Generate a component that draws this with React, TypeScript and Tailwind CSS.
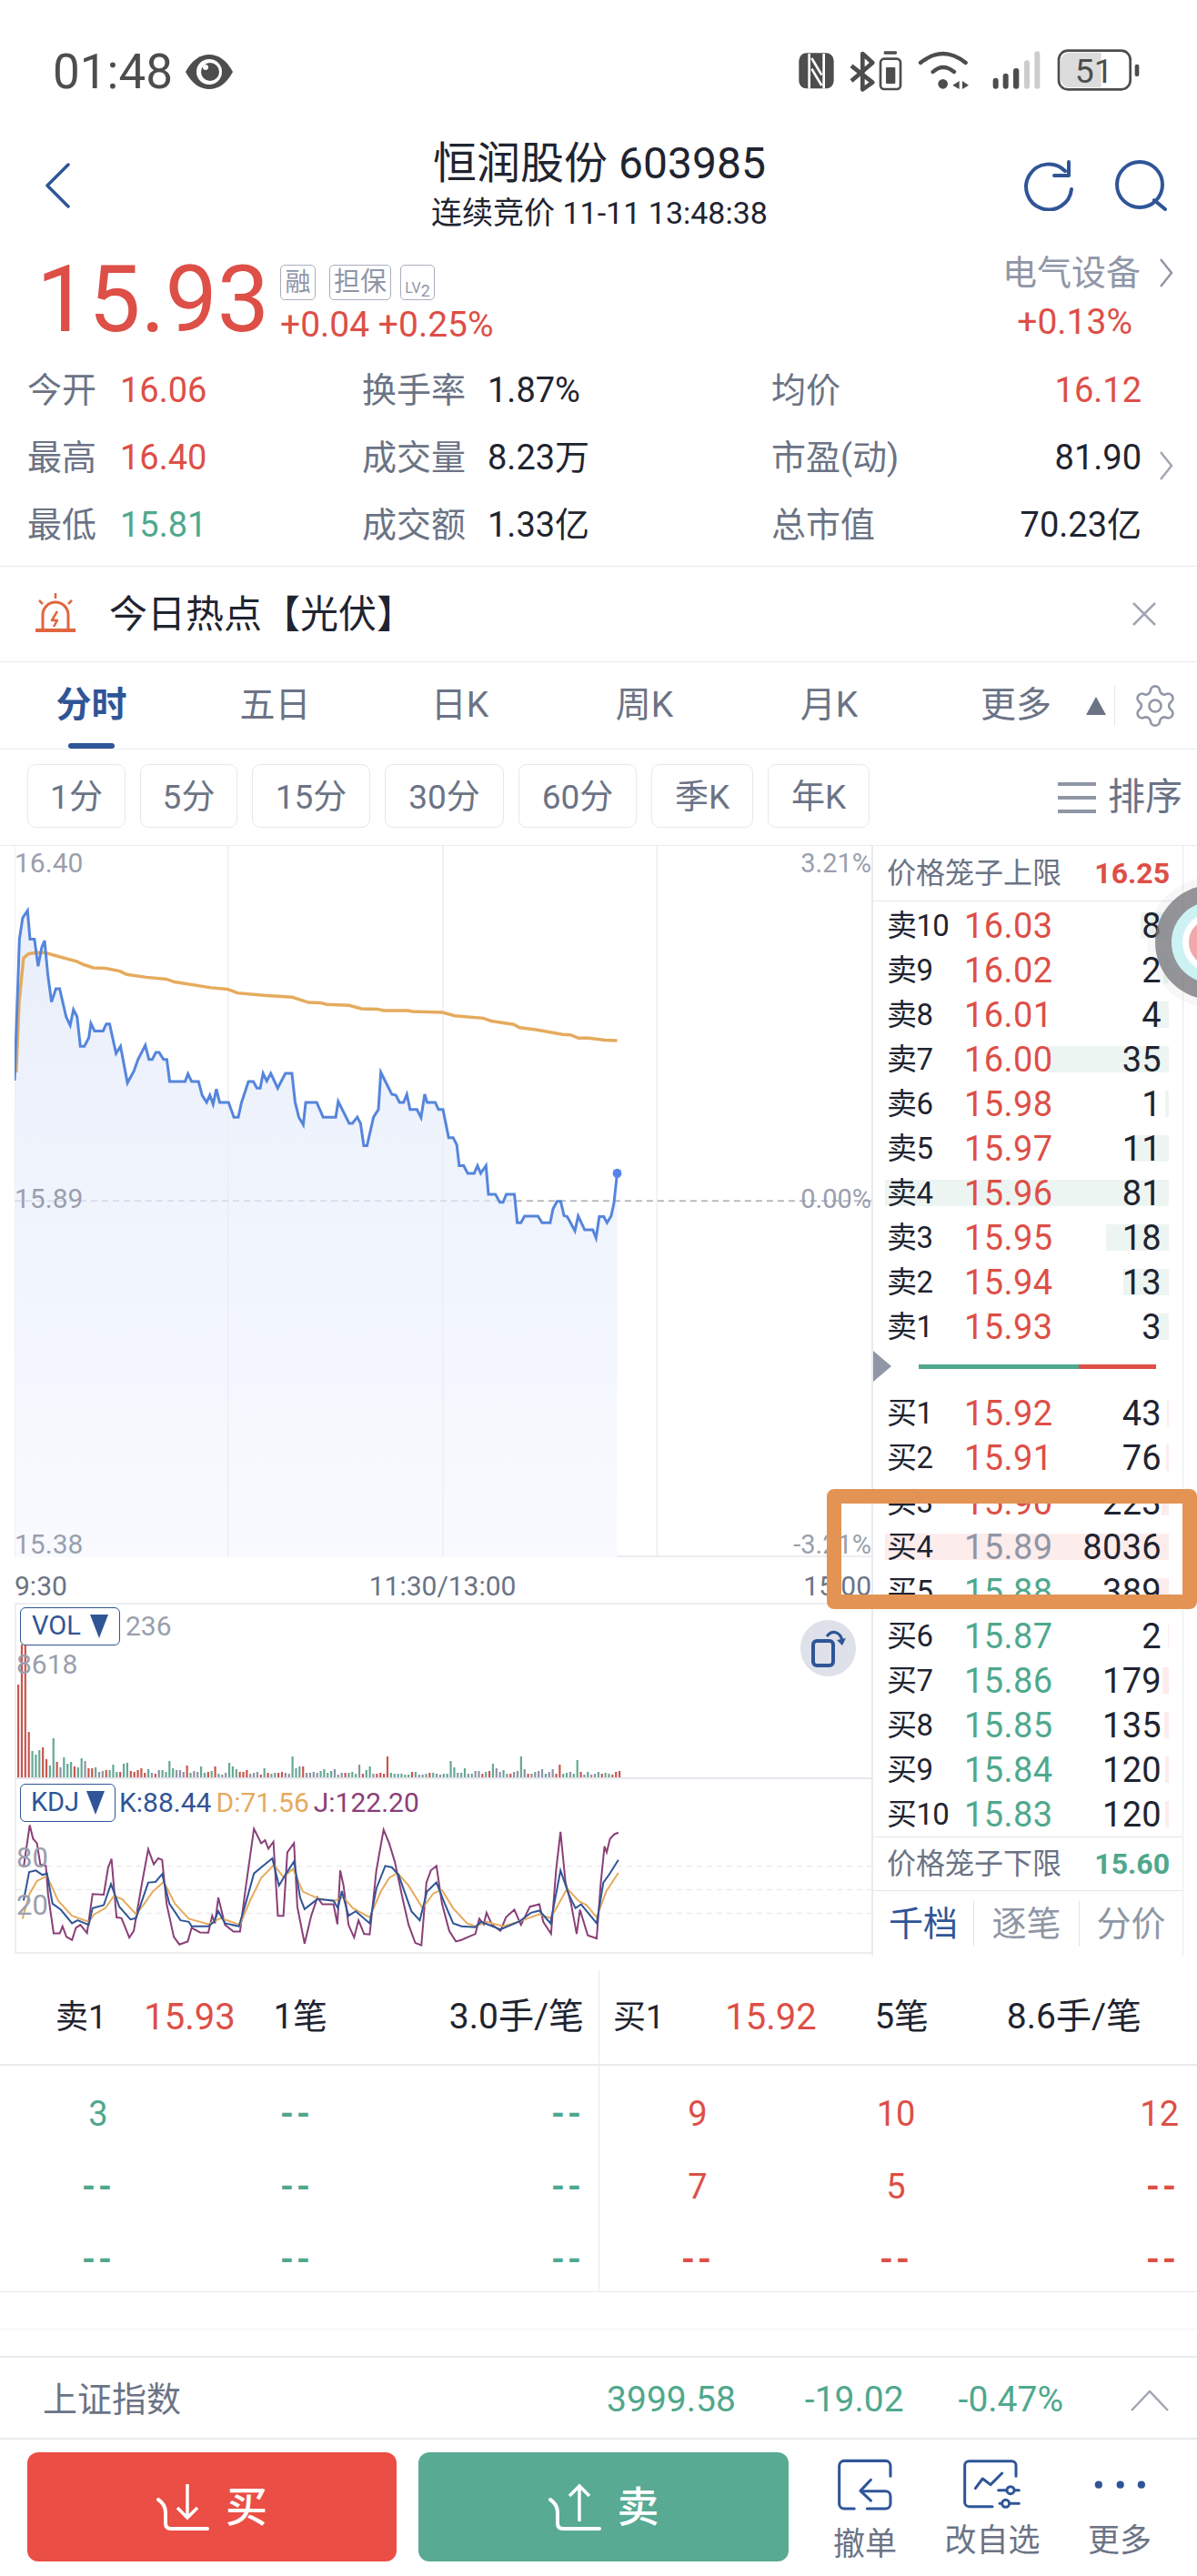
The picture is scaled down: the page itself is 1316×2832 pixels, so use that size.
import { Settings } from "lucide-react";

const RED = "text-[#dd4f47]";
const GREEN = "text-[#4fa88d]";
const GREY = "text-[#6b7385]";

const pricePts =
  "36,512 48,215 56,170 68,155 74,215 85,215 94,272 103,232 110,218 118,290 127,347 138,319 147,319 163,378 173,396 181,363 190,378 198,440 208,440 219,422 224,392 233,408 254,408 262,393 270,393 286,455 297,440 314,517 330,492 340,468 358,438 367,468 375,468 384,453 392,453 403,468 411,468 418,514 456,514 463,498 472,514 489,514 498,543 509,558 517,543 525,562 533,530 541,558 563,558 576,589 587,589 595,558 612,514 624,514 633,528 641,528 648,497 657,513 667,497 684,528 703,497 719,497 727,558 736,589 747,605 753,558 780,558 796,589 827,589 833,556 860,602 868,602 880,589 888,602 896,649 904,649 920,589 932,573 938,495 965,541 975,543 984,558 994,558 1002,541 1010,573 1027,573 1037,590 1046,541 1052,558 1072,558 1080,573 1091,573 1105,632 1116,632 1125,647 1131,691 1142,691 1152,707 1168,707 1176,691 1184,707 1197,691 1203,751 1220,751 1231,768 1239,768 1247,751 1267,751 1274,811 1283,811 1292,797 1325,797 1335,811 1355,811 1362,782 1372,766 1381,766 1389,796 1397,798 1416,828 1424,797 1440,826 1460,826 1468,843 1476,798 1487,798 1495,811 1505,797 1512,770 1520,707";
const avgPts =
  "40,495 47,350 58,255 70,246 90,243 110,243 130,248 190,262 205,268 230,275 260,276 295,282 312,289 360,295 410,299 430,305 520,317 560,320 585,328 650,333 720,337 760,348 790,349 805,352 860,354 890,361 930,362 945,365 1005,365 1015,367 1090,369 1120,376 1190,381 1210,387 1265,394 1280,401 1320,405 1385,415 1405,416 1425,423 1450,423 1490,427 1520,428";

const jPts =
  "38,940 49,800 55,845 62,860 68,930 78,935 82,1030 92,1158 103,1158 108,1135 115,1170 125,1180 132,1140 140,1130 152,1157 162,1028 182,1030 190,940 196,912 205,1105 214,1108 228,1172 236,1150 250,1000 262,880 272,930 280,910 287,915 295,1060 308,1170 318,1195 333,1185 340,1140 355,1155 370,1156 377,1100 382,1125 388,1040 400,1130 415,1152 427,1152 437,1010 452,812 465,860 472,850 478,878 487,855 495,1100 505,1100 512,890 524,860 530,1070 543,1192 555,1100 566,1040 575,1062 595,1062 602,1128 607,950 613,1000 622,1130 632,1172 640,1115 650,1160 660,1162 672,950 685,815 695,860 705,920 720,1050 730,1130 742,1190 753,1198 762,990 770,950 780,935 790,1060 803,1150 815,1185 825,1180 850,1160 857,1110 865,1128 870,1090 880,1130 895,1150 905,1105 920,1080 932,1130 948,1070 965,1062 972,1120 986,1160 995,950 1003,822 1012,990 1022,1060 1032,1160 1038,1080 1052,1165 1068,1175 1075,1000 1082,870 1086,890 1092,845 1100,830 1107,825";
const kPts =
  "38,1050 48,955 60,950 72,965 80,960 90,1060 105,1080 125,1125 135,1115 155,1130 162,1075 182,1065 195,995 210,1070 230,1112 240,1108 262,990 275,988 287,962 300,1060 320,1115 335,1120 340,1135 370,1135 380,1120 388,1085 400,1125 425,1135 437,1060 452,960 465,940 485,910 497,1000 510,960 524,920 535,1040 543,1078 566,1045 595,1050 603,1075 610,1018 622,1100 635,1085 660,1125 672,1010 688,935 700,940 712,965 735,1085 750,1115 763,1020 780,990 795,1060 810,1125 825,1135 850,1138 860,1120 895,1145 930,1118 950,1090 965,1083 985,1125 1003,950 1018,1030 1030,1075 1040,1062 1068,1125 1080,990 1090,965 1107,915";
const dPts =
  "36,1110 48,1030 62,985 80,968 100,1050 125,1100 155,1120 165,1095 185,1075 200,1035 215,1045 240,1095 255,1060 270,1020 290,988 310,1060 335,1110 370,1128 392,1108 427,1130 445,1050 465,975 488,932 505,972 522,945 540,1020 566,1042 595,1052 612,1038 630,1075 660,1105 680,1020 695,975 710,958 730,1000 755,1075 775,1025 790,1015 810,1075 835,1125 850,1135 870,1120 900,1135 930,1118 965,1095 985,1108 1000,1060 1015,1010 1035,1050 1050,1065 1068,1105 1085,1020 1107,958";

// height + colour (r / g / n)
const volData =
  "102r 146r 146r 50r 29g 25g 30g 33r 20r 13g 43g 17r 11n 22g 15g 17g 12r 11g 21g 18n 10r 10r 11g 6n 7n 8r 8g 14g 6g 6r 15g 16g 7r 6r 8r 10r 5r 9g 5n 4r 8n 8g 6g 18g 10g 8n 8n 6n 13r 5g 7n 6n 12g 5g 6r 7g 12r 4g 3n 5n 16g 12g 9g 6r 6r 8r 4n 5n 6n 3r 10g 5r 4n 5g 5r 6r 5n 4n 23g 10g 12g 12r 5n 5n 6n 5n 7g 9g 5g 7g 9n 3n 5n 5r 5g 6g 4g 14n 4r 8g 12g 4n 4r 5r 4r 23r 5g 4g 4g 4g 3g 3g 6r 6g 3n 3n 4g 5r 5g 4n 3n 4g 4g 18g 11g 5n 5g 10g 4n 4g 7n 7n 4r 6g 7r 15g 10n 6n 8g 4n 4r 6n 7n 23g 9n 4r 4n 6n 7n 9n 4g 6n 9n 4r 14r 4g 5g 6n 4g 19g 6r 3n 6g 3n 4n 6g 4r 5g 4g 3r 6r 7r"
    .split(" ")
    .map((s) => ({ h: parseInt(s), c: s.slice(-1) }));

const volColor: Record<string, string> = { r: "#c9564f", g: "#66a895", n: "#8e93a3" };

const sells = [
  ["卖10", "16.03", "8", 31],
  ["卖9", "16.02", "2", 6],
  ["卖8", "16.01", "4", 14],
  ["卖7", "16.00", "35", 134],
  ["卖6", "15.98", "1", 4],
  ["卖5", "15.97", "11", 43],
  ["卖4", "15.96", "81", 312],
  ["卖3", "15.95", "18", 69],
  ["卖2", "15.94", "13", 50],
  ["卖1", "15.93", "3", 11],
] as const;

const buys = [
  ["买1", "15.92", "43", 2, RED],
  ["买2", "15.91", "76", 3, RED],
  ["买3", "15.90", "223", 8, RED],
  ["买4", "15.89", "8036", 312, "text-[#8f96a6]"],
  ["买5", "15.88", "389", 14, GREEN],
  ["买6", "15.87", "2", 1, GREEN],
  ["买7", "15.86", "179", 7, GREEN],
  ["买8", "15.85", "135", 5, GREEN],
  ["买9", "15.84", "120", 4, GREEN],
  ["买10", "15.83", "120", 4, GREEN],
] as const;

const periods = [
  ["1分", "w-[108px]"],
  ["5分", "w-[107px]"],
  ["15分", "w-[130px]"],
  ["30分", "w-[131px]"],
  ["60分", "w-[130px]"],
  ["季K", "w-[112px]"],
  ["年K", "w-[112px]"],
];

function StatusIcons() {
  return (
    <svg width="420" height="80" viewBox="0 0 1260 240" fill="none">
      <rect x="55" y="58" width="115" height="117" rx="25" fill="#4d4d4d" />
      <path d="M89 60V175M137 60V175M97 75L130 130M97 110L130 165" stroke="#fff" strokeWidth="8" />
      <path d="M228 100L298 155L265 178V60L298 90L228 150" stroke="#4d4d4d" strokeWidth="14" strokeLinejoin="round" />
      <rect x="335" y="52" width="43" height="10" rx="4" fill="#4d4d4d" />
      <rect x="324" y="77" width="66" height="100" rx="12" stroke="#4d4d4d" strokeWidth="8" />
      <rect x="342" y="105" width="31" height="54" rx="3" fill="#4d4d4d" />
      <path d="M456 90Q530 30 605 90M497 120Q530 90 567 120" stroke="#4d4d4d" strokeWidth="13" strokeLinecap="round" />
      <circle cx="530" cy="160" r="16" fill="#4d4d4d" />
      <path d="M584 150L562 164L584 177ZM594 150L615 164L594 177Z" fill="#4d4d4d" />
      <rect x="695" y="140" width="18" height="36" rx="9" fill="#4d4d4d" />
      <rect x="728" y="125" width="18" height="51" rx="9" fill="#4d4d4d" />
      <rect x="762" y="108" width="19" height="68" rx="9" fill="#4d4d4d" />
      <rect x="798" y="82" width="18" height="94" rx="9" fill="#cdcdcd" />
      <rect x="832" y="52" width="18" height="124" rx="9" fill="#cdcdcd" />
      <path d="M918 86a30 30 0 0 1 30-30H1052V172H948a30 30 0 0 1-30-30Z" fill="#dcdcdc" />
      <rect x="912" y="50" width="236" height="128" rx="30" stroke="#4d4d4d" strokeWidth="8" />
      <rect x="1163" y="95" width="14" height="40" rx="6" fill="#4d4d4d" />
      <text x="1028" y="157" textAnchor="middle" fontSize="112" fontFamily="Roboto" fill="#4d4d4d">
        51
      </text>
    </svg>
  );
}

function BookRow({ label, price, qty, bar, barColor, priceColor }: { label: string; price: string; qty: string; bar: number; barColor: string; priceColor: string }) {
  return (
    <div className="relative flex h-[49px] items-center pl-[15px] pr-[23px]">
      <div className={`absolute right-[15px] h-[29px] ${barColor}`} style={{ width: bar }} />
      <span className="relative w-[85px] text-[33px] tracking-[-0.6px] text-[#1f2430]">{label}</span>
      <span className={`relative pt-[2px] text-[38px] tracking-[0.4px] ${priceColor}`}>{price}</span>
      <span className="relative ml-auto pt-[2px] text-[38px] tracking-[0.3px] text-[#1f2430]">{qty}</span>
    </div>
  );
}

function TickRow({ cells, color }: { cells: string[]; color: string }) {
  const dash = (s: string) => (s === "--" ? "font-bold tracking-[3px]" : "");
  return (
    <div className={`flex h-[80px] items-center text-[38px] ${color}`}>
      <span className={`ml-[58px] w-[100px] text-center ${dash(cells[0])}`}>{cells[0]}</span>
      <span className={`ml-[118px] w-[100px] text-center ${dash(cells[1])}`}>{cells[1]}</span>
      <span className={`ml-auto ${dash(cells[2])} ${color === RED ? "mr-[20px]" : "mr-[16px]"}`}>{cells[2]}</span>
    </div>
  );
}

export default function App() {
  return (
    <div className="relative h-[2832px] w-[1316px] overflow-hidden bg-white [font-family:Roboto,'Noto_Sans_CJK_SC',sans-serif]">
      {/* status bar */}
      <div className="flex h-[130px] items-center justify-between pl-[58px] pr-[36px] pt-[28px]">
        <div className="flex items-center">
          <span className="text-[53px] leading-none text-[#4d4d4d]">01:48</span>
          <svg className="ml-[13px]" width="54" height="40" viewBox="0 0 54 40">
            <path d="M1 20C8 7 17 1 27 1s19 6 26 19c-7 13-16 19-26 19S8 33 1 20Z" fill="#4d4d4d" />
            <circle cx="27" cy="20" r="14" fill="#fff" />
            <circle cx="28" cy="20" r="10" fill="#4d4d4d" />
            <circle cx="23" cy="15" r="3" fill="#fff" />
          </svg>
        </div>
        <StatusIcons />
      </div>

      {/* header */}
      <div className="grid h-[148px] grid-cols-[1fr_auto_1fr] items-center pl-[35px] pr-[33px]">
        <svg className="ml-[14px]" width="28" height="50" viewBox="0 0 28 50" fill="none">
          <path d="M26 2L3 25L26 48" stroke="#2f5597" strokeWidth="3.5" strokeLinecap="round" strokeLinejoin="round" />
        </svg>
        <div className="flex flex-col items-center text-[#1f2430]">
          <div className="text-[48px] leading-[52px]">恒润股份 603985</div>
          <div className="mt-[8px] text-[34px] leading-[40px]">连续竞价 11-11 13:48:38</div>
        </div>
        <div className="flex items-center justify-end gap-[44px]">
          <svg width="56" height="56" viewBox="0 0 56 56" fill="none">
            <path d="M46 12A25 25 0 1 0 53 32" stroke="#2f5597" strokeWidth="4" strokeLinecap="round" />
            <path d="M34 17H50V2" stroke="#2f5597" strokeWidth="4" strokeLinecap="round" strokeLinejoin="round" />
          </svg>
          <svg width="58" height="56" viewBox="0 0 58 56" fill="none">
            <circle cx="28" cy="27" r="25" stroke="#2f5597" strokeWidth="4" />
            <path d="M44 44L56 54" stroke="#2f5597" strokeWidth="4" strokeLinecap="round" />
          </svg>
        </div>
      </div>

      {/* price */}
      <div className="flex h-[112px] pl-[40px] pr-[26px]">
        <div className={`w-[268px] text-[102px] leading-[103px] ${RED}`}>15.93</div>
        <div className="flex flex-col pt-[13px]">
          <div className="flex items-center text-[#8f96a6]">
            <span className="flex h-[39px] w-[39px] items-center justify-center rounded-[5px] border border-[#a9aeba] text-[28px]">融</span>
            <span className="ml-[15px] flex h-[39px] w-[68px] items-center justify-center rounded-[5px] border border-[#a9aeba] text-[29px]">担保</span>
            <span className="ml-[10px] flex h-[39px] w-[38px] items-end justify-center rounded-[5px] border border-[#a9aeba] text-[16px] leading-[24px]">
              LV<sup className="text-[18px]">2</sup>
            </span>
          </div>
          <div className={`mt-[7px] text-[39px] leading-[40px] ${RED}`}>+0.04 +0.25%</div>
        </div>
        <div className="ml-auto flex flex-col items-end">
          <div className="flex items-center text-[38px] leading-[44px] text-[#8f96a6]">
            电气设备
            <svg className="ml-[20px]" width="16" height="34" viewBox="0 0 16 34" fill="none">
              <path d="M2 2L14 17L2 32" stroke="#8f96a6" strokeWidth="2.5" />
            </svg>
          </div>
          <div className={`mr-[45px] mt-[10px] text-[39px] leading-[44px] ${RED}`}>+0.13%</div>
        </div>
      </div>

      {/* quote table */}
      <div className="relative h-[233px] border-b border-[#e9eaee] pl-[30px] pt-[2px]">
        {[
          ["今开", "16.06", RED, "换手率", "1.87%", "均价", "16.12", RED],
          ["最高", "16.40", RED, "成交量", "8.23万", "市盈(动)", "81.90", "text-[#1f2430]"],
          ["最低", "15.81", GREEN, "成交额", "1.33亿", "总市值", "70.23亿", "text-[#1f2430]"],
        ].map((r) => (
          <div key={r[0]} className="flex h-[74px] items-center pr-[61px]">
            <span className={`w-[102px] text-[38px] ${GREY}`}>{r[0]}</span>
            <span className={`w-[266px] text-[38px] ${r[2]}`}>{r[1]}</span>
            <span className={`w-[138px] text-[38px] ${GREY}`}>{r[3]}</span>
            <span className="w-[312px] text-[38px] text-[#1f2430]">{r[4]}</span>
            <span className={`text-[38px] ${GREY}`}>{r[5]}</span>
            <span className={`ml-auto text-[38px] ${r[7]}`}>{r[6]}</span>
          </div>
        ))}
        <svg className="absolute right-[26px] top-[105px]" width="16" height="34" viewBox="0 0 16 34" fill="none">
          <path d="M2 2L14 17L2 32" stroke="#a1a6b3" strokeWidth="2.5" />
        </svg>
      </div>

      {/* hot topic */}
      <div className="flex h-[105px] items-center border-b border-[#e9eaee] pl-[38px] pr-[44px]">
        <svg width="46" height="46" viewBox="0 0 46 46" fill="none">
          <path d="M9 39V24a14 14 0 0 1 28 0V39" stroke="#e0663f" strokeWidth="3" />
          <path d="M1 41H45" stroke="#e0663f" strokeWidth="4" />
          <path d="M25 20L19 30H25L21 37" stroke="#e0663f" strokeWidth="2.5" strokeLinejoin="round" />
          <path d="M23 0V6M5 8L9 12M41 8L37 12" stroke="#e0663f" strokeWidth="2.5" />
        </svg>
        <span className="ml-[36px] text-[42px] text-[#1f2430]">今日热点【光伏】</span>
        <svg className="ml-auto" width="28" height="28" viewBox="0 0 28 28" fill="none">
          <path d="M2 2L26 26M26 2L2 26" stroke="#a1a6b3" strokeWidth="2.5" />
        </svg>
      </div>

      {/* chart tabs */}
      <div className={`flex h-[96px] items-center border-b border-[#e9eaee] text-[39px] ${GREY}`}>
        <div className="relative flex h-full w-[201px] items-center justify-center font-bold text-[#2f5597]">
          分时
          <div className="absolute bottom-0 left-[75px] h-[6px] w-[51px] rounded-full bg-[#2f5597]" />
        </div>
        <div className="w-[203px] text-center">五日</div>
        <div className="w-[203px] text-center">日K</div>
        <div className="w-[203px] text-center">周K</div>
        <div className="w-[203px] text-center">月K</div>
        <span className="ml-[65px]">更多</span>
        <svg className="ml-[38px]" width="22" height="20" viewBox="0 0 22 20">
          <path d="M11 0L22 20H0Z" fill="#6b7385" />
        </svg>
        <div className="ml-[9px] h-[44px] w-px bg-[#e3e5ea]" />
        <Settings className="ml-[18px]" size={52} strokeWidth={1.2} color="#8f96a6" />
      </div>

      {/* period buttons */}
      <div className="flex h-[106px] items-start border-b border-[#e9eaee] pl-[30px] pr-[16px] pt-[16px]">
        <div className="flex gap-[16px]">
          {periods.map(([p, w]) => (
            <div key={p} className={`flex h-[70px] items-center justify-center rounded-[9px] border border-[#e6e8ee] pt-[3px] text-[37px] ${GREY} ${w}`}>
              {p}
            </div>
          ))}
        </div>
        <div className={`ml-auto flex h-[70px] items-center pt-[3px] text-[41px] ${GREY}`}>
          <svg className="mr-[13px]" width="42" height="36" viewBox="0 0 42 36">
            <path d="M0 3H42M0 18H42M0 33H42" stroke="#8f96a6" strokeWidth="4" />
          </svg>
          排序
        </div>
      </div>

      {/* charts + order book */}
      <div className="flex h-[1220px] pl-[16px] pr-[15px]">
        <div className="flex w-[942px] flex-col">
          <div className="relative h-[782px] border-b-2 border-[#eceef2]">
            <svg className="absolute inset-0" width="942" height="782" viewBox="36 19 2110 1495" preserveAspectRatio="none" fill="none">
              <defs>
                <linearGradient id="fill" x1="0" y1="0" x2="0" y2="1">
                  <stop offset="0" stopColor="#e9effb" />
                  <stop offset="1" stopColor="#f8fafe" />
                </linearGradient>
              </defs>
              <polygon points={`36,1514 ${pricePts} 1520,1514`} fill="url(#fill)" />
              <path d="M36 19V1514M562 19V1514M1091 19V1514M1618 19V1514" stroke="#eceef2" strokeWidth="1.5" vectorEffect="non-scaling-stroke" />
              <path d="M36 765H1270" stroke="#d3d8e6" strokeWidth="1.5" strokeDasharray="7 5" vectorEffect="non-scaling-stroke" />
              <path d="M1270 765H2146" stroke="#a6a9b1" strokeWidth="1.5" strokeDasharray="7 5" vectorEffect="non-scaling-stroke" />
              <polyline points={avgPts} stroke="#e5ab5d" strokeWidth="3.5" vectorEffect="non-scaling-stroke" />
              <polyline points={pricePts} stroke="#5585dc" strokeWidth="3" vectorEffect="non-scaling-stroke" />
              <ellipse cx="1520" cy="707" rx="11" ry="10" fill="#5585ea" />
            </svg>
            <span className="absolute left-0 top-[4px] text-[30px] leading-[30px] text-[#9a9fae]">16.40</span>
            <span className="absolute left-0 top-[373px] text-[30px] leading-[30px] text-[#9a9fae]">15.89</span>
            <span className="absolute bottom-[-3px] left-0 text-[30px] leading-[30px] text-[#9a9fae]">15.38</span>
            <span className="absolute right-0 top-[4px] text-[29px] leading-[30px] text-[#9a9fae]">3.21%</span>
            <span className="absolute right-0 top-[373px] text-[29px] leading-[30px] text-[#9a9fae]">0.00%</span>
            <span className="absolute bottom-[-3px] right-0 text-[29px] leading-[30px] text-[#9a9fae]">-3.21%</span>
          </div>
          <div className={`flex h-[50px] items-center justify-between pt-[12px] text-[30px] ${GREY}`}>
            <span>9:30</span>
            <span className="ml-[16px]">11:30/13:00</span>
            <span>15:00</span>
          </div>

          {/* VOL */}
          <div className="relative h-[194px] border-b-2 border-l-2 border-t-2 border-[#eceef2] border-b-[#e6e7ee]">
            <svg className="absolute inset-0" width="942" height="190" fill="none">
              {volData.map((b, i) => (
                <rect key={i} x={1 + (i * 661) / (volData.length - 1)} y={190 - b.h} width="2.2" height={b.h} fill={volColor[b.c]} />
              ))}
            </svg>
            <div className="absolute left-[4px] top-[3px] flex h-[42px] w-[110px] items-center justify-center gap-[10px] rounded-[6px] border border-[#2f5597] bg-white text-[29px] text-[#2f5597]">
              VOL
              <svg width="20" height="26" viewBox="0 0 20 26">
                <path d="M0 0H20L10 26Z" fill="#2f5597" />
              </svg>
            </div>
            <span className="absolute left-[120px] top-[7px] text-[30px] leading-[34px] text-[#9a9fae]">236</span>
            <span className="absolute left-0 top-[49px] text-[30px] leading-[34px] text-[#9a9fae]">8618</span>
            <div className="absolute right-[17px] top-[17px] flex h-[62px] w-[61px] items-center justify-center rounded-full bg-[#dfe1ea]">
              <svg width="40" height="42" viewBox="0 0 40 42" fill="none">
                <rect x="3" y="13" width="22" height="27" rx="4" stroke="#2f5597" strokeWidth="4" />
                <path d="M18 8C24 0 33 3 35 13" stroke="#2f5597" strokeWidth="3" />
                <path d="M29 12L35 18L39 10Z" fill="#2f5597" />
              </svg>
            </div>
          </div>

          {/* KDJ */}
          <div className="relative h-[192px] border-b-2 border-l-2 border-[#eceef2]">
            <svg className="absolute inset-0" width="942" height="190" viewBox="25 648 1540 572" preserveAspectRatio="none" fill="none">
              <path d="M25 936H1565M25 1014H1565M25 1092H1565" stroke="#ebecf0" strokeWidth="1.5" strokeDasharray="6 5" vectorEffect="non-scaling-stroke" />
              <polyline points={jPts} stroke="#8a3f78" strokeWidth="2" vectorEffect="non-scaling-stroke" />
              <polyline points={dPts} stroke="#e5ab5d" strokeWidth="2" vectorEffect="non-scaling-stroke" />
              <polyline points={kPts} stroke="#2f5597" strokeWidth="2" vectorEffect="non-scaling-stroke" />
            </svg>
            <div className="absolute left-[4px] top-[5px] flex h-[42px] w-[105px] items-center justify-center gap-[8px] rounded-[6px] border border-[#2f5597] bg-white text-[29px] text-[#2f5597]">
              KDJ
              <svg width="20" height="26" viewBox="0 0 20 26">
                <path d="M0 0H20L10 26Z" fill="#2f5597" />
              </svg>
            </div>
            <div className="absolute left-[113px] top-[9px] flex gap-[5px] text-[30px] leading-[34px]">
              <span className="text-[#2f5597]">K:88.44</span>
              <span className="text-[#e5ab5d]">D:71.56</span>
              <span className="text-[#8a3f78]">J:122.20</span>
            </div>
            <span className="absolute left-0 top-[70px] text-[31px] leading-[34px] text-[#9a9fae]">80</span>
            <span className="absolute left-0 top-[122px] text-[31px] leading-[34px] text-[#9a9fae]">20</span>
          </div>
        </div>

        {/* order book */}
        <div className="flex w-[343px] flex-col border-l-2 border-r border-[#e9eaee]">
          <div className="flex h-[61px] items-center justify-between border-b border-[#e3e5ea] pl-[15px] pr-[14px]">
            <span className={`text-[32px] ${GREY}`}>价格笼子上限</span>
            <span className={`text-[32px] font-bold ${RED}`}>16.25</span>
          </div>
          <div className="h-[2px]" />
          {sells.map(([l, p, q, b]) => (
            <BookRow key={l} label={l} price={p} qty={q} bar={b} barColor="bg-[#edf5f2]" priceColor={RED} />
          ))}
          <div className="relative h-[46px]">
            <div className="absolute left-0 top-[2px] h-0 w-0 border-b-[17px] border-l-[20px] border-t-[17px] border-b-transparent border-l-[#8f96a6] border-t-transparent" />
            <div className="absolute left-[50px] top-[17px] flex h-[5px] w-[261px]">
              <div className="w-[176px] bg-[#4fa88d]" />
              <div className="flex-1 bg-[#dd4f47]" />
            </div>
          </div>
          {buys.map(([l, p, q, b, c]) => (
            <BookRow key={l} label={l} price={p} qty={q} bar={b} barColor="bg-[#fdecec]" priceColor={c} />
          ))}
          <div className="flex h-[60px] items-center justify-between border-y border-[#e3e5ea] pl-[15px] pr-[14px]">
            <span className={`text-[32px] ${GREY}`}>价格笼子下限</span>
            <span className={`text-[32px] font-bold ${GREEN}`}>15.60</span>
          </div>
          <div className="flex h-[70px] items-center pt-[2px] text-[38px] text-[#8f96a6]">
            <div className="w-[110px] text-center text-[#2f5597]">千档</div>
            <div className="h-[50px] w-px bg-[#e3e5ea]" />
            <div className="w-[115px] text-center">逐笔</div>
            <div className="h-[50px] w-px bg-[#e3e5ea]" />
            <div className="flex-1 text-center">分价</div>
          </div>
        </div>
      </div>

      {/* trade ticks */}
      <div className="flex h-[121px] border-b-2 border-[#e9eaee] pt-[16px] text-[#1f2430]">
        <div className="flex w-[658px] items-center pr-[16px]">
          <span className="ml-[61px] text-[36px]">卖1</span>
          <span className={`ml-[41px] text-[40px] ${RED}`}>15.93</span>
          <span className="ml-[42px] text-[38px]">1笔</span>
          <span className="ml-auto text-[39px]">3.0手/笔</span>
        </div>
        <div className="flex flex-1 items-center border-l border-[#e9eaee] pr-[61px]">
          <span className="ml-[15px] text-[36px]">买1</span>
          <span className={`ml-[67px] text-[40px] ${RED}`}>15.92</span>
          <span className="ml-[64px] text-[38px]">5笔</span>
          <span className="ml-auto text-[39px]">8.6手/笔</span>
        </div>
      </div>
      <div className="flex h-[249px] border-b border-[#e9eaee]">
        <div className="w-[658px] pt-[13px]">
          <TickRow cells={["3", "--", "--"]} color={GREEN} />
          <TickRow cells={["--", "--", "--"]} color={GREEN} />
          <TickRow cells={["--", "--", "--"]} color={GREEN} />
        </div>
        <div className="flex-1 border-l border-[#e9eaee] pt-[13px]">
          <TickRow cells={["9", "10", "12"]} color={RED} />
          <TickRow cells={["7", "5", "--"]} color={RED} />
          <TickRow cells={["--", "--", "--"]} color={RED} />
        </div>
      </div>
      <div className="h-[41px] border-b border-[#f3f4f6]" />
      <div className="h-[31px] border-b-2 border-[#e9eaee]" />

      {/* index bar */}
      <div className="flex h-[90px] items-center border-b-2 border-[#e9eaee] pl-[47px] pr-[31px] pt-[5px]">
        <span className={`text-[38px] ${GREY}`}>上证指数</span>
        <span className={`ml-auto text-[39px] ${GREEN}`}>3999.58</span>
        <span className={`ml-[76px] text-[39px] ${GREEN}`}>-19.02</span>
        <span className={`ml-[60px] text-[39px] ${GREEN}`}>-0.47%</span>
        <svg className="ml-[74px]" width="42" height="24" viewBox="0 0 42 24" fill="none">
          <path d="M1 23L21 2L41 23" stroke="#a1a6b3" strokeWidth="2.5" />
        </svg>
      </div>

      {/* actions */}
      <div className="flex pl-[30px] pt-[14px]">
        <div className="flex h-[120px] w-[406px] items-center justify-center gap-[18px] rounded-[12px] bg-[#ea4e44] text-[46px] font-medium text-white">
          <svg width="58" height="52" viewBox="0 0 58 52" fill="none">
            <path d="M2 18C8 22 10 26 10 32V44C10 48 12 50 16 50H56" stroke="#fff" strokeWidth="4" strokeLinecap="round" />
            <path d="M34 1V38M23 27L34 38L45 27" stroke="#fff" strokeWidth="3.5" />
          </svg>
          买
        </div>
        <div className="ml-[24px] flex h-[120px] w-[407px] items-center justify-center gap-[18px] rounded-[12px] bg-[#58aa93] text-[46px] font-medium text-white">
          <svg width="58" height="52" viewBox="0 0 58 52" fill="none">
            <path d="M2 18C8 22 10 26 10 32V44C10 48 12 50 16 50H56" stroke="#fff" strokeWidth="4" strokeLinecap="round" />
            <path d="M34 42V3M23 14L34 3L45 14" stroke="#fff" strokeWidth="3.5" />
          </svg>
          卖
        </div>
        <div className={`ml-[14px] flex text-[35px] leading-[40px] ${GREY}`}>
          <div className="flex w-[140px] flex-col items-center">
            <svg className="mt-[7px]" width="60" height="58" viewBox="64 44 178 170" fill="none" stroke="#2f5597" strokeWidth="9" strokeLinecap="round" strokeLinejoin="round">
              <path d="M118 206H85a16 16 0 0 1-16-16V66a16 16 0 0 1 16-16H220a16 16 0 0 1 16 16V100" />
              <path d="M160 206H220a16 16 0 0 0 16-16V165a16 16 0 0 0-16-16H140" />
              <path d="M172 112L138 148L172 180" />
            </svg>
            <span className="mt-[17px]">撤单</span>
          </div>
          <div className="flex w-[140px] flex-col items-center">
            <svg className="mt-[7px]" width="64" height="58" viewBox="476 44 192 170" fill="none" stroke="#2f5597" strokeWidth="9" strokeLinecap="round" strokeLinejoin="round">
              <path d="M572 200H495a14 14 0 0 1-14-14V64a14 14 0 0 1 14-14H636a14 14 0 0 1 14 14V100" />
              <path d="M516 140L540 108L566 128L604 90" />
              <path d="M592 146H660M596 190H660" />
              <circle cx="632" cy="146" r="12" fill="#fff" />
              <circle cx="616" cy="190" r="12" fill="#fff" />
            </svg>
            <span className="mt-[13px]">改自选</span>
          </div>
          <div className="flex w-[140px] flex-col items-center">
            <svg className="mt-[7px]" width="60" height="58" viewBox="900 44 176 170" fill="#2f5597">
              <circle cx="920" cy="128" r="12" />
              <circle cx="990" cy="128" r="12" />
              <circle cx="1058" cy="128" r="12" />
            </svg>
            <span className="mt-[13px]">更多</span>
          </div>
        </div>
      </div>

      {/* floating bubble */}
      <div className="absolute left-[1261px] top-[964px] flex h-[144px] w-[144px] items-center justify-center rounded-full bg-[#00000008]">
        <div className="flex h-[126px] w-[126px] items-center justify-center rounded-full bg-[#7a7b80cc]">
          <div className="flex h-[90px] w-[90px] items-center justify-center rounded-full bg-[#cdf2f4]">
            <div className="flex h-[66px] w-[66px] items-center justify-center rounded-full bg-white">
              <div className="h-[52px] w-[52px] rounded-full border-[10px] border-[#efa9ad] bg-[#97989c]" />
            </div>
          </div>
        </div>
      </div>

      {/* orange highlight */}
      <div className="absolute left-[909px] top-[1637px] h-[132px] w-[407px] rounded-[8px] border-[16px] border-[#e39455]" />
    </div>
  );
}
